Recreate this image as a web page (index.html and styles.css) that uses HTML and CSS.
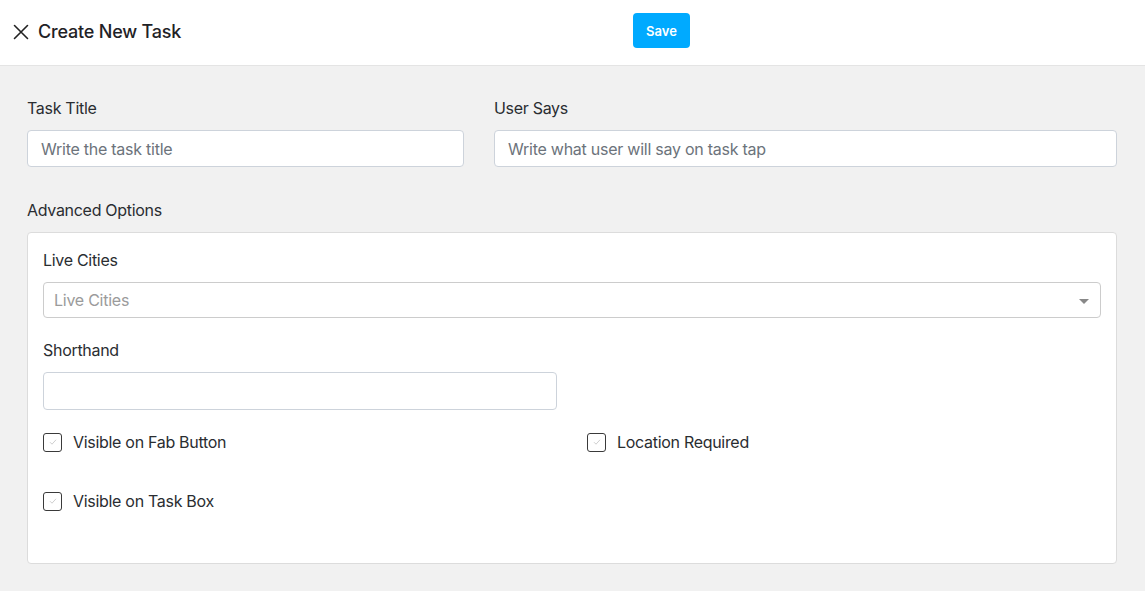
FILE: index.html
```html
<!DOCTYPE html>
<html>
<head>
<meta charset="utf-8">
<link rel="stylesheet" href="styles.css">
</head>
<body>
<header class="topbar">
  <div class="topbar-left">
    <svg class="close-icon" width="16" height="16" viewBox="0 0 16 16"><path d="M1.5 1.5 L14.5 14.5 M14.5 1.5 L1.5 14.5" stroke="#222" stroke-width="1.6" fill="none" stroke-linecap="round"/></svg>
    <h1 class="title">Create New Task</h1>
  </div>
  <button class="save-btn">Save</button>
</header>
<main class="content">
  <div class="row-top">
    <div class="field">
      <label class="label">Task Title</label>
      <div class="input"><span class="placeholder">Write the task title</span></div>
    </div>
    <div class="field">
      <label class="label">User Says</label>
      <div class="input"><span class="placeholder">Write what user will say on task tap</span></div>
    </div>
  </div>
  <div class="section-label">Advanced Options</div>
  <div class="card">
    <label class="label">Live Cities</label>
    <div class="select">
      <span class="select-placeholder">Live Cities</span>
      <span class="caret"></span>
    </div>
    <label class="label label-gap">Shorthand</label>
    <div class="half-grid">
      <div class="input input-tall"></div>
    </div>
    <div class="check-grid">
      <div class="check"><span class="box"><svg width="10" height="10" viewBox="0 0 10 10"><path d="M2 5.2 L4 7.2 L8 2.8" stroke="#cfcfcf" stroke-width="1" fill="none"/></svg></span><span class="check-label">Visible on Fab Button</span></div>
      <div class="check"><span class="box"><svg width="10" height="10" viewBox="0 0 10 10"><path d="M2 5.2 L4 7.2 L8 2.8" stroke="#cfcfcf" stroke-width="1" fill="none"/></svg></span><span class="check-label">Location Required</span></div>
      <div class="check"><span class="box"><svg width="10" height="10" viewBox="0 0 10 10"><path d="M2 5.2 L4 7.2 L8 2.8" stroke="#cfcfcf" stroke-width="1" fill="none"/></svg></span><span class="check-label">Visible on Task Box</span></div>
    </div>
  </div>
</main>
</body>
</html>
```

FILE: styles.css
```css
* { box-sizing: border-box; }
html, body { margin: 0; padding: 0; }
body {
  font-family: Inter, "Noto Sans", sans-serif;
  background: #f1f1f1;
  color: #212529;
  width: 1145px;
  height: 591px;
  overflow: hidden;
}
.topbar {
  height: 66px;
  background: #fff;
  border-bottom: 1px solid #e4e4e4;
  display: flex;
  align-items: center;
  padding-left: 13px;
}
.topbar-left {
  width: 620px;
  display: flex;
  align-items: center;
  gap: 9px;
  margin-top: -2px;
}
.close-icon { display: block; margin-top: 1px; }
.title {
  margin: 0;
  font-size: 18px;
  font-weight: 500;
  color: #1f2226;
  letter-spacing: -0.2px;
}
.save-btn {
  width: 57px;
  height: 35px;
  margin-top: -4px;
  border: none;
  border-radius: 4px;
  background: #00aaff;
  color: #fff;
  font-family: Inter, "Noto Sans", sans-serif;
  font-size: 13px;
  font-weight: 600;
  padding: 0;
}
.content {
  padding: 32px 28px 0 27px;
}
.row-top {
  display: grid;
  grid-template-columns: 437px 1fr;
  column-gap: 30px;
}
.field { display: flex; flex-direction: column; }
.label {
  display: block;
  font-size: 16px;
  line-height: 20px;
  color: #2a2d31;
  letter-spacing: -0.3px;
  margin-bottom: 12px;
}
.input {
  height: 37px;
  background: #fff;
  border: 1px solid #cdd3db;
  border-radius: 4px;
  display: flex;
  align-items: center;
  padding-left: 13px;
}
.placeholder {
  font-size: 16px;
  color: #6c737b;
  letter-spacing: -0.25px;
}
.section-label {
  font-size: 16px;
  line-height: 20px;
  color: #2a2d31;
  letter-spacing: -0.3px;
  margin-top: 33px;
  margin-bottom: 12px;
}
.card {
  background: #fff;
  border: 1px solid #dcdcdc;
  border-radius: 4px;
  padding: 17px 15px 0 15px;
  height: 332px;
}
.select {
  height: 36px;
  border: 1px solid #cccccc;
  border-radius: 4px;
  display: flex;
  align-items: center;
  justify-content: space-between;
  padding: 0 11px 0 10px;
}
.select-placeholder {
  font-size: 16px;
  color: #9b9b9b;
  letter-spacing: -0.25px;
}
.caret {
  width: 0; height: 0;
  border-left: 5px solid transparent;
  border-right: 5px solid transparent;
  border-top: 5px solid #888;
  margin-top: 2px;
}
.label-gap { margin-top: 22px; }
.half-grid {
  display: grid;
  grid-template-columns: 514px 1fr;
}
.input-tall { height: 38px; }
.check-grid {
  display: grid;
  grid-template-columns: 544px 1fr;
  row-gap: 39px;
  margin-top: 22px;
}
.check {
  display: flex;
  align-items: center;
  gap: 11px;
  height: 20px;
}
.box {
  width: 19px;
  height: 19px;
  border: 1px solid #3a3a3a;
  border-radius: 3px;
  display: flex;
  align-items: center;
  justify-content: center;
}
.box svg { display: block; }
.check-label {
  font-size: 16px;
  color: #2a2d31;
  letter-spacing: -0.3px;
}
```
